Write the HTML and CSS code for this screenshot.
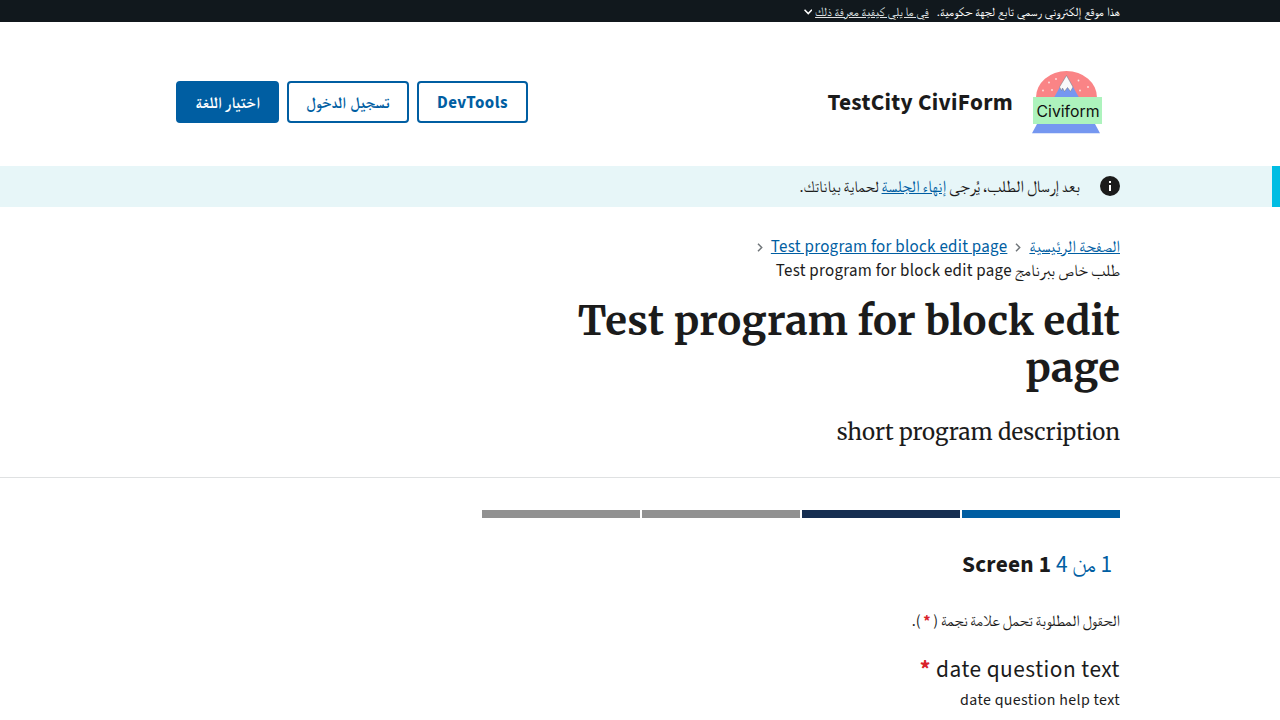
FILE: index.html
```html
<!DOCTYPE html>
<html lang="ar" dir="rtl">
<head>
<meta charset="utf-8">
<title>TestCity CiviForm</title>
<link rel="stylesheet" href="styles.css">
</head>
<body>
<div class="banner"><div class="container banner-row">
  <span class="banner-text">هذا موقع إلكتروني رسمي تابع لجهة حكومية.</span>
  <a class="banner-link">في ما يلي كيفية معرفة ذلك</a>
  <svg class="banner-chevron" viewBox="0 0 8 6"><path d="M.5.7 4 4.300 7.500.7" fill="none" stroke="#fff" stroke-width="1.400"/></svg>
</div></div>
<header class="container header">
  <div class="brand">
    <svg class="logo" viewBox="0 0 72 64">
      <path d="M4 27.500a30.500 26.500 0 0 1 61 0z" fill="#fa8486"/>
      <path d="M22 27.500 34.500 5.500 47 27.500z" fill="#7597f0"/>
      <path d="M34.500 5.500 41 17l-2.500 4.500-3-4-3 4-2-3.500-1 2.500-2-3.500z" fill="#f8f8fa" stroke="#777" stroke-width=".5"/>
      <g fill="#fde4e4"><circle cx="11" cy="20.500" r=".9"/><circle cx="17" cy="12.500" r=".9"/><circle cx="24" cy="9" r=".9"/><circle cx="20" cy="20" r=".9"/><circle cx="46.500" cy="10.500" r=".9"/><circle cx="56" cy="17" r=".9"/><circle cx="48" cy="20.500" r=".9"/></g>
      <path d="M5 54h58l5 9.300H0z" fill="#7597f0"/>
      <path d="M1 27h69v27H1z" fill="#adf3bd"/>
      <text x="36" y="47.300" class="logo-text">Civiform</text>
    </svg>
    <span class="title">TestCity CiviForm</span>
  </div>
  <nav class="actions">
    <a class="button latin">DevTools</a>
    <a class="button sign-in">تسجيل الدخول</a>
    <a class="button filled">اختيار اللغة</a>
  </nav>
</header>
<div class="alert"><div class="container alert-row">
  <svg class="info" viewBox="0 0 20 20"><circle cx="10" cy="10" r="10" fill="#1b1b1b"/><path d="M9 5h2v2H9zM9 9h2v6H9z" fill="#fff"/></svg>
  <p>بعد إرسال الطلب، يُرجى <a>إنهاء الجلسة</a> <span class="alert-end">لحماية بياناتك.</span></p>
</div></div>
<section class="intro"><div class="container">
  <div class="crumbs">
    <div class="crumb-line"><a>الصفحة الرئيسية</a><svg class="chev" viewBox="0 0 6 9"><path d="M1 .8 4.700 4.500 1 8.200" fill="none" stroke="#71767a" stroke-width="1.500"/></svg><a class="crumb-latin" dir="ltr">Test program for block edit page</a><svg class="chev" viewBox="0 0 6 9"><path d="M1 .8 4.700 4.500 1 8.200" fill="none" stroke="#71767a" stroke-width="1.500"/></svg></div>
    <div class="crumb-current">طلب خاص ببرنامج <span class="crumb-latin">Test program for block edit page</span></div>
  </div>
  <h1>Test program for block edit page</h1>
  <p class="description">short program description</p>
</div></section>
<main class="container">
  <div class="steps"><i class="done"></i><i class="current"></i><i></i><i></i></div>
  <h2><span class="count">1 من 4</span> <span class="screen">Screen 1</span></h2>
  <p class="required">الحقول المطلوبة تحمل علامة نجمة ( <b>*</b> ).</p>
  <p class="question">date question text <b>*</b></p>
  <p class="help">date question help text</p>
</main>
</body>
</html>
```
FILE: styles.css
```css
* { box-sizing: border-box; }
body {
  margin: 0;
  height: 720px;
  overflow: hidden;
  color: #1b1b1b;
  background: #fff;
  font: 16.96px/24px "Source Sans 3", FreeSerif, sans-serif;
}
p, h1, h2 { margin: 0; }
a { color: #005ea2; text-decoration: underline; }
.container { width: 1024px; margin: 0 auto; padding: 0 32px; }
.banner { height: 22px; background: #11181d; color: #fff; font-size: 12.72px; }
.banner-row { display: flex; align-items: center; height: 24px; }
.banner-text { word-spacing: .4px; }
.banner-link { color: #dfe1e2; margin-right: 8px; word-spacing: .2px; }
.banner-chevron { width: 8.500px; height: 6.500px; margin-right: 3px; }
.header { display: flex; align-items: center; justify-content: space-between; height: 144px; padding-top: 16px; }
.brand { display: flex; align-items: center; padding-right: 18px; }
.logo { width: 72px; height: 64px; margin-left: 19px; margin-right: -2px; }
.logo-text { font: 15.800px Inter, sans-serif; text-anchor: middle; direction: ltr; fill: #111; }
.title { margin-top: 2px; font-size: 23.32px; font-weight: 700; line-height: 28px; letter-spacing: .3px; }
.actions { display: flex; gap: 8px; padding-left: 16px; }
.button { width: 103px; height: 42px; border: 2px solid #005ea2; border-radius: 4px; text-align: center; text-decoration: none; font-size: 16px; font-weight: 700; line-height: 40px; white-space: nowrap; }
.button.latin { width: 111px; font-size: 16.96px; letter-spacing: .5px; }
.button.sign-in { width: 122px; word-spacing: 1px; }
.button.filled { background: #005ea2; color: #fff; }
.alert { height: 41px; background: #e7f6f8; border-right: 8px solid #00bde3; }
.alert-row { display: flex; position: relative; right: -4px; }
.info { width: 20px; height: 20px; margin: 10px 0 0 20px; }
.alert p { margin-top: 9px; word-spacing: -.5px; }
.alert p a { word-spacing: 0; }
.alert-end { font-size: 16.200px; }
.intro { height: 271px; border-bottom: 1px solid #dfe1e2; padding-top: 28px; }
.crumb-line { display: flex; align-items: center; }
.crumb-latin { letter-spacing: .28px; }
.crumb-current { word-spacing: -.1px; }
.chev { width: 6px; height: 9px; margin: 1px 8px 0; }
h1 { width: 560px; margin-top: 15px; font: 700 40.100px/47px Merriweather, serif; letter-spacing: .1px; }
.description { margin-top: 25px; font: 400 22.300px/30px Merriweather, serif; }
.steps { display: flex; gap: 2px; width: 638px; margin-top: 32px; }
.steps i { flex: 1; height: 8px; background: #919191; }
.steps .done { background: #005ea2; }
.steps .current { background: #162e51; }
h2 { margin-top: 33px; padding-right: 8px; font-size: 23.32px; line-height: 28px; }
.count { color: #005ea2; font-weight: 400; }
.screen { letter-spacing: .25px; }
.required { margin-top: 30px; font-size: 15.900px; word-spacing: -.4px; }
.required b, .question b { color: #d9222a; }
.question { margin-top: 21px; font-size: 23.32px; line-height: 32px; letter-spacing: .5px; }
.help { margin-top: 2px; font-size: 15.900px; letter-spacing: .35px; }
```
